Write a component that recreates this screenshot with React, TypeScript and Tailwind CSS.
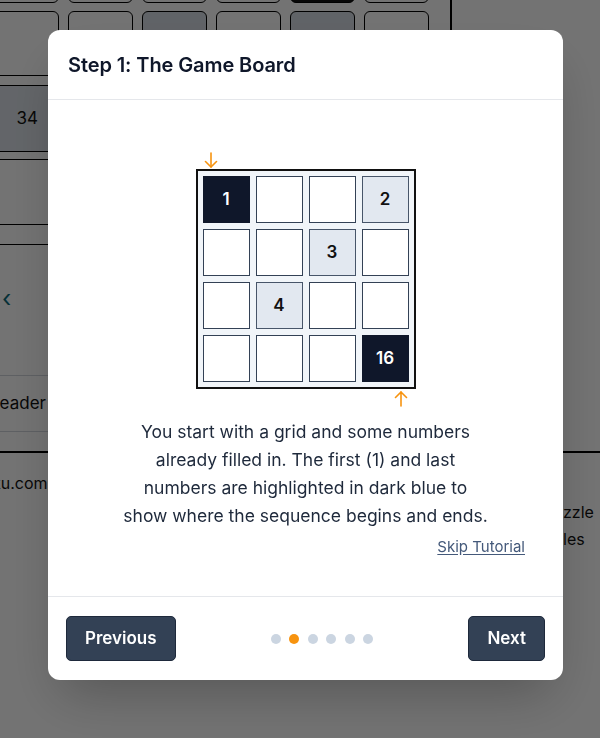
import React from "react";

const cells: { v?: string; kind: "empty" | "given" | "end" }[] = [
  { v: "1", kind: "end" },
  { kind: "empty" },
  { kind: "empty" },
  { v: "2", kind: "given" },
  { kind: "empty" },
  { kind: "empty" },
  { v: "3", kind: "given" },
  { kind: "empty" },
  { kind: "empty" },
  { v: "4", kind: "given" },
  { kind: "empty" },
  { kind: "empty" },
  { kind: "empty" },
  { kind: "empty" },
  { kind: "empty" },
  { v: "16", kind: "end" },
];

function ArrowDown() {
  return (
    <svg width="14" height="16" viewBox="0 0 14 16" fill="none" stroke="#f7930f" strokeWidth="1.6" strokeLinecap="round" strokeLinejoin="round">
      <path d="M7 1v14" />
      <path d="M1.5 9.5 7 15l5.5-5.5" />
    </svg>
  );
}

function ArrowUp() {
  return (
    <svg width="14" height="16" viewBox="0 0 14 16" fill="none" stroke="#f7930f" strokeWidth="1.6" strokeLinecap="round" strokeLinejoin="round">
      <path d="M7 15V1" />
      <path d="M1.5 6.5 7 1l5.5 5.5" />
    </svg>
  );
}

function Background() {
  const row1 = [0, 1, 2, 3, 4, 5];
  return (
    <div className="w-[600px] h-[738px] overflow-hidden bg-white text-[#111] flex flex-col" style={{ fontFamily: "Inter, 'Noto Sans', sans-serif" }}>
      <div className="w-[452px] border-r-2 border-black flex flex-col -mt-[62px] shrink-0">
        <div className="h-[138px] shrink-0 flex flex-col gap-[8px]">
          <div className="flex gap-[9px] -ml-[6px]">
            {row1.map((i) => (
              <div key={i} className={`shrink-0 w-[65px] h-[65px] rounded-md border border-black ${i === 4 ? "bg-[#111]" : "bg-white"}`} />
            ))}
          </div>
          <div className="flex gap-[9px] -ml-[6px]">
            {row1.map((i) => (
              <div key={i} className={`shrink-0 w-[65px] h-[65px] rounded-md border border-black ${i === 2 || i === 4 ? "bg-[#d6dce4]" : "bg-white"}`} />
            ))}
          </div>
        </div>
        <div className="h-[9px] shrink-0" />
        <div className="h-[67px] shrink-0 border-y border-black bg-[#dce1e8] flex items-center">
          <span className="w-[38px] text-right text-[17px]">34</span>
        </div>
        <div className="h-[7px] shrink-0" />
        <div className="h-[66px] shrink-0 border-y border-black" />
        <div className="h-[19px] shrink-0" />
        <div className="h-[131px] shrink-0 border-t border-black flex items-start pt-[42px]">
          <span className="pl-[2px] text-[#0d6e7d] text-[24px] leading-[24px]">‹</span>
        </div>
        <div className="h-[57px] shrink-0 border-y border-gray-300 flex items-center">
          <span className="-ml-[10px] text-[17px]">Leader</span>
        </div>
        <div className="h-[19px] shrink-0" />
      </div>
      <div className="border-t-2 border-black flex justify-between">
        <div className="pt-[18px] -ml-[8px] text-[16px] leading-[24px]">ku.com</div>
        <div className="w-[37px] pt-[46px] text-[16px] leading-[27px] overflow-hidden whitespace-nowrap">
          <div>zzle</div>
          <div>les</div>
        </div>
      </div>
    </div>
  );
}

export default function App() {
  return (
    <div className="relative w-[600px] h-[738px] overflow-hidden" style={{ fontFamily: "Inter, 'Noto Sans', sans-serif" }}>
      <Background />
      <div className="fixed inset-0 bg-black/55 flex items-start pl-[48px] pt-[30px]">
        <div className="w-[515px] h-[650px] bg-white rounded-xl shadow-2xl flex flex-col">
          <div className="h-[70px] px-5 flex items-center border-b border-gray-200">
            <h2 className="text-[20px] font-semibold text-[#0f172a] tracking-[-0.1px]">Step 1: The Game Board</h2>
          </div>
          <div className="flex-1 flex flex-col items-center pt-[52px] border-b border-gray-200">
            <div className="w-[220px] flex flex-col">
              <div className="h-[16px] pl-[8px] flex items-start">
                <ArrowDown />
              </div>
              <div className="mt-px w-[220px] h-[220px] border-2 border-[#111] bg-[#f1f5f9] p-[5px] grid grid-cols-4 gap-[6px]">
                {cells.map((c, i) => (
                  <div
                    key={i}
                    className={`flex items-center justify-center border text-[17px] font-semibold ${
                      c.kind === "end"
                        ? "bg-[#0f172a] text-white border-[#0f172a]"
                        : c.kind === "given"
                        ? "bg-[#e2e8f0] text-[#111] border-[#475569]"
                        : "bg-white border-[#334155]"
                    }`}
                  >
                    {c.v}
                  </div>
                ))}
              </div>
              <div className="mt-[2px] h-[16px] pr-[8px] flex justify-end">
                <ArrowUp />
              </div>
            </div>
            <p className="mt-[11px] w-[400px] text-center text-[17.5px] leading-[28px] text-[#1e293b]">
              You start with a grid and some numbers
              <br />
              already filled in. The first (1) and last
              <br />
              numbers are highlighted in dark blue to
              <br />
              show where the sequence begins and ends.
            </p>
            <div className="self-stretch flex justify-end pr-[38px] mt-[7px]">
              <a className="text-[15px] leading-[20px] text-[#44597a] underline underline-offset-2">Skip Tutorial</a>
            </div>
          </div>
          <div className="h-[83px] px-[18px] flex items-center justify-between">
            <button className="h-[45px] px-[18px] rounded-[5px] bg-[#334155] border border-[#1e293b] text-white text-[17px] font-semibold">Previous</button>
            <div className="flex gap-[8.5px]">
              {[0, 1, 2, 3, 4, 5].map((i) => (
                <span key={i} className={`w-[10px] h-[10px] rounded-full ${i === 1 ? "bg-[#f7930f]" : "bg-[#cbd5e1]"}`} />
              ))}
            </div>
            <button className="h-[45px] px-[18px] rounded-[5px] bg-[#334155] border border-[#1e293b] text-white text-[17px] font-semibold">Next</button>
          </div>
        </div>
      </div>
    </div>
  );
}
